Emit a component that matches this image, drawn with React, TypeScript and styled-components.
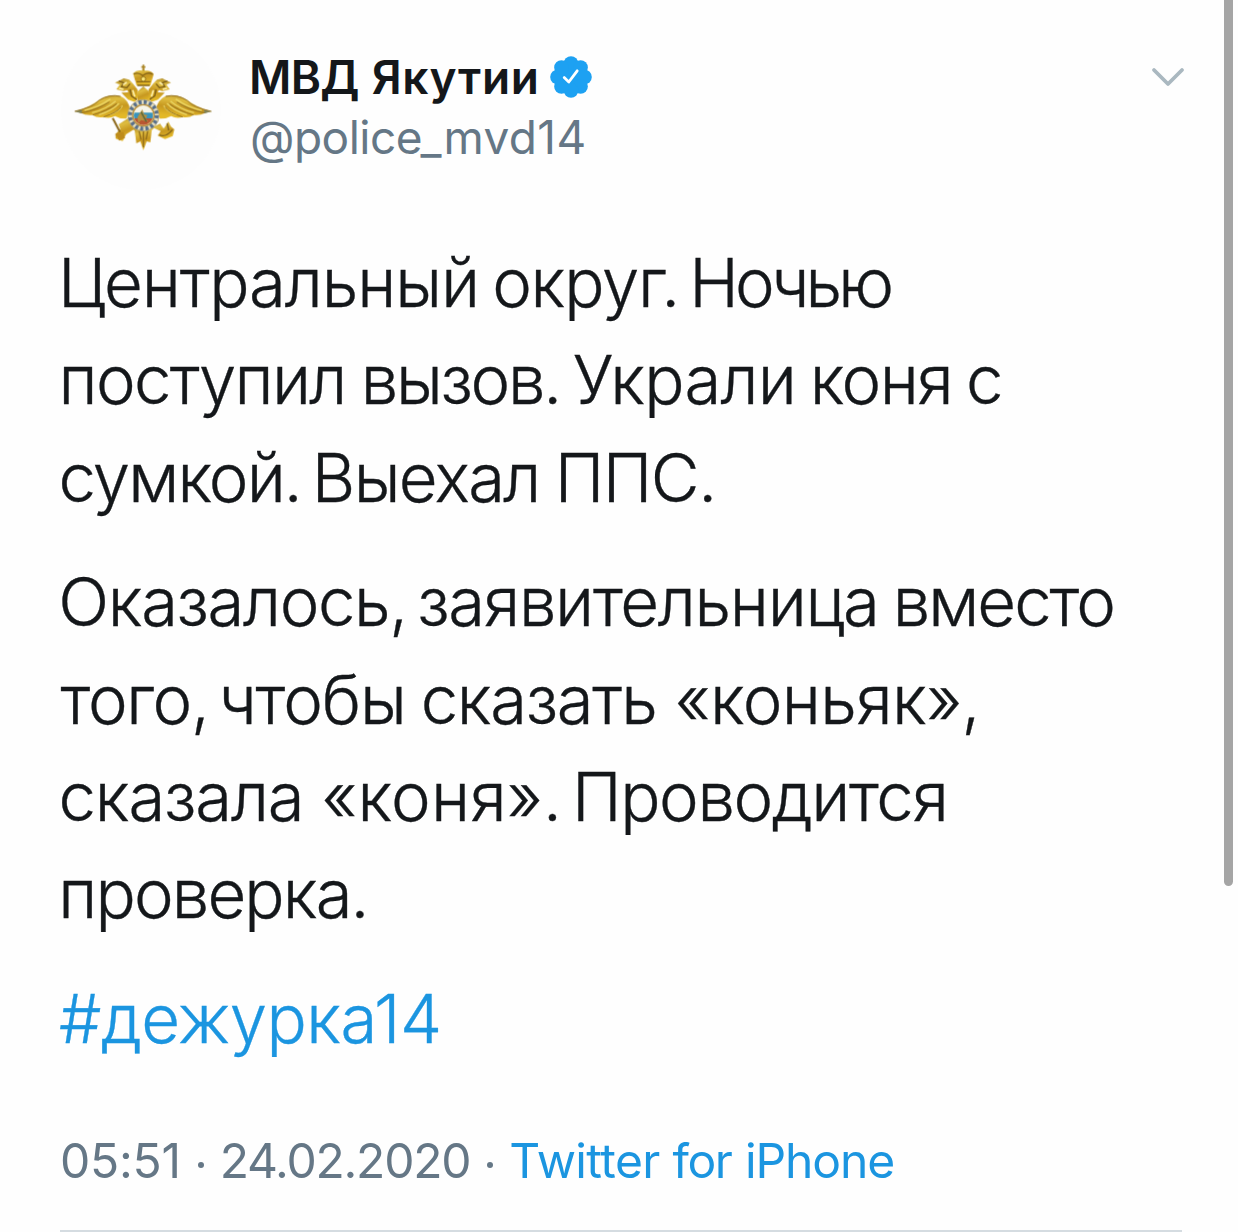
import React from "react";
import styled, { createGlobalStyle } from "styled-components";

interface Word {
  text: string;
  tracking: number;
  shift?: number;
}

const GlobalStyle = createGlobalStyle`
  body {
    margin: 0;
    background: #fefefe;
    overflow: hidden;
  }
`;

const Screen = styled.div`
  display: flex;
  justify-content: space-between;
  box-sizing: border-box;
  width: 1238px;
  height: 1232px;
  padding: 0 5px 0 60px;
  background: #fefefe;
  color: #14171a;
  font-family: Inter, "Liberation Sans", sans-serif;
  overflow: hidden;
`;

const Tweet = styled.article`
  display: flex;
  flex-direction: column;
  width: 1126px;
`;

const Header = styled.header`
  display: flex;
  flex: none;
  align-items: flex-start;
  height: 234px;
  padding-top: 30px;
  box-sizing: border-box;
`;

const Avatar = styled.div`
  width: 170px;
  height: 160px;
  flex: none;
`;

const Names = styled.div`
  display: flex;
  flex-direction: column;
  flex: 1;
  padding: 17px 0 0 19px;
`;

const NameRow = styled.div`
  display: flex;
  align-items: center;
  gap: 10px;
  height: 60px;
`;

const Name = styled.span`
  font-size: 46px;
  font-weight: 600;
  line-height: 60px;
  white-space: nowrap;
`;

const Handle = styled.span`
  padding-left: 1px;
  color: #657786;
  font-size: 46px;
  line-height: 60px;
  white-space: nowrap;
`;

const MenuButton = styled.button`
  display: flex;
  margin: 36px 0 0;
  padding: 0;
  border: 0;
  background: none;
`;

const Body = styled.div`
  display: flex;
  flex: none;
  flex-direction: column;
  gap: 27px;
`;

const Paragraph = styled.p<{ $link?: boolean }>`
  margin: 0;
  color: ${({ $link }) => ($link ? "#1b95e0" : "#14171a")};
  font-size: 67px;
  font-weight: 300;
  line-height: 97.4px;
  -webkit-text-stroke: 0.35px currentColor;
`;

const Line = styled.span`
  display: block;
  white-space: nowrap;
`;

const Tracked = styled.span<{ $tracking: number; $shift?: number }>`
  margin-left: ${({ $shift = 0 }) => $shift}px;
  letter-spacing: ${({ $tracking }) => $tracking}px;
`;

const Meta = styled.div`
  display: flex;
  flex: none;
  align-items: center;
  height: 60px;
  margin-top: 64px;
  color: #657786;
  font-size: 48px;
  line-height: 60px;
  white-space: nowrap;
`;

const Source = styled.span`
  color: #1b95e0;
`;

const Dot = styled.i`
  width: 6px;
  height: 6px;
  margin: 7px 16px 0 17px;
  border-radius: 50%;
  background: #657786;
`;

const Divider = styled.hr`
  flex: none;
  width: 1122px;
  height: 2px;
  margin: auto 0 0;
  border: 0;
  background: #d5dce1;
`;

const ScrollThumb = styled.div`
  width: 9px;
  height: 886px;
  border-radius: 0 0 5px 5px;
  background: #a5a5a5;
`;

const paragraphs: Word[][][] = [
  [
    [
      { text: "Центральный", tracking: -1.1, shift: -2.1 },
      { text: "округ.", tracking: -1.25, shift: -5.6 },
      { text: "Ночью", tracking: -4, shift: -8.5 },
    ],
    [
      { text: "поступил", tracking: -1.7, shift: -1.4 },
      { text: "вызов.", tracking: -2.3, shift: -3.8 },
      { text: "Украли", tracking: -0.75, shift: -5.9 },
      { text: "коня", tracking: -1.55, shift: -5.2 },
      { text: "с", tracking: 0, shift: -5.1 },
    ],
    [
      { text: "сумкой.", tracking: -1.9, shift: -1.4 },
      { text: "Выехал", tracking: -1.7, shift: -7.9 },
      { text: "ППС.", tracking: -1.5, shift: -3.9 },
    ],
  ],
  [
    [
      { text: "Оказалось,", tracking: -1.4, shift: -1.7 },
      { text: "заявительница", tracking: -1.3, shift: -8.4 },
      { text: "вместо", tracking: -2, shift: -4.8 },
    ],
    [
      { text: "того,", tracking: -1.35, shift: 0.6 },
      { text: "чтобы", tracking: -1.1, shift: -9 },
      { text: "сказать", tracking: -1.35, shift: -3.8 },
      { text: "«коньяк»,", tracking: -0.6, shift: -0.7 },
    ],
    [
      { text: "сказала", tracking: -1.2, shift: -1.4 },
      { text: "«коня».", tracking: 0.2, shift: -0.7 },
      { text: "Проводится", tracking: -1.4, shift: -8.9 },
    ],
    [{ text: "проверка.", tracking: -1.9, shift: -1.7 }],
  ],
];

const name: Word[] = [
  { text: "МВД", tracking: -0.7 },
  { text: "Якутии", tracking: 0.7, shift: 1.2 },
];

const source: Word[] = [
  { text: "Twitter", tracking: -0.6 },
  { text: "for", tracking: -1.45, shift: -0.7 },
  { text: "iPhone", tracking: -1.1 },
];

const Words: React.FC<{ words: Word[] }> = ({ words }) => (
  <>
    {words.map((word, i) => (
      <React.Fragment key={word.text}>
        {i > 0 && " "}
        <Tracked $tracking={word.tracking} $shift={word.shift}>
          {word.text}
        </Tracked>
      </React.Fragment>
    ))}
  </>
);

// One wing with its eagle head; the other side is mirrored.
const EagleHalf: React.FC = () => (
  <g>
    <path d="M44 244 Q88 232 115 211 Q145 190 181 198 Q204 207 211 239 L199 266 Q180 267 165 258 Q148 267 130 261 Q110 264 98 255 Q76 257 64 249Z" fill="url(#gold)" />
    <path d="M73 241 Q116 232 151 207 M96 248 Q139 237 167 213 M117 254 Q157 242 177 220 M148 255 Q180 243 187 227" fill="none" stroke="#ecd766" strokeWidth="4" />
    <path d="M64 249 Q112 239 148 216 M98 255 Q145 242 170 221 M130 261 Q173 247 183 231 M44 244 Q99 232 117 211 Q148 191 181 199" fill="none" stroke="#94701f" strokeWidth="3" />
    <path d="M44 244 L67 240 L64 250Z" fill="#7c805c" />
    <path d="M184 188 L204 209 L225 216 L237 198 L232 178 L218 160 L207 149 L191 145 L178 152 L165 158 L179 164 L169 178 L190 183 L202 180 L205 187Z" fill="url(#gold)" />
    <path d="M176 153 L191 158 L184 170 L200 173 L210 161 M210 178 L214 198 L231 209" fill="none" stroke="#795b17" strokeWidth="4" />
    <path d="M189 164 L200 157 M177 175 L190 178 M218 180 L224 200" stroke="#fff3b0" strokeWidth="5" />
  </g>
);

const Emblem: React.FC = () => (
  <svg width="170" height="160" viewBox="0 0 510 480">
    <defs>
      <linearGradient id="gold" x1="0" y1="0" x2="0.3" y2="1">
        <stop offset="0" stopColor="#a78326" />
        <stop offset="0.35" stopColor="#dfbd40" />
        <stop offset="0.65" stopColor="#c79820" />
        <stop offset="1" stopColor="#e3b827" />
      </linearGradient>
      <clipPath id="shield">
        <circle cx="250" cy="256" r="29" />
      </clipPath>
      <filter id="soft">
        <feGaussianBlur stdDeviation="1.2" />
      </filter>
    </defs>
    <circle cx="243" cy="240" r="240" fill="#fdfdfd" />
    <g filter="url(#soft)">
      <EagleHalf />
      <g transform="translate(498 0) scale(-1 1)">
        <EagleHalf />
      </g>
      <path d="M233 184 L250 169 L267 184 L269 218 L232 218Z" fill="url(#gold)" />
      <path d="M219 130 Q230 119 246 122 L250 107 L254 122 Q273 119 281 132 L271 167 L230 167Z" fill="url(#gold)" />
      <path d="M250 104 v18 M244 111 h12" stroke="#a88325" strokeWidth="5" />
      <path d="M221 132 Q236 125 248 137 Q264 124 278 133 M230 155 H271 M232 166 H269" fill="none" stroke="#876517" strokeWidth="4" />
      <circle cx="250" cy="147" r="7" fill="#fae77c" stroke="#967315" strokeWidth="3" />
      <path d="M207 263 L176 283 L181 297 L166 312 L167 326 L188 333 L198 313 L222 298Z" fill="url(#gold)" />
      <path d="M158 264 L180 306" stroke="#8d691b" strokeWidth="6" />
      <path d="M166 311 L191 306 L195 324 L177 332Z" fill="#bd8b1e" />
      <path d="M278 292 L302 303 L293 317 L315 327 L338 318 L343 298 L333 290 L325 275 L311 296 L300 281Z" fill="url(#gold)" />
      <path d="M298 315 Q318 323 337 299 M321 280 L326 301" fill="none" stroke="#7e611f" strokeWidth="4" />
      <path d="M216 294 L224 302 L229 340 L241 334 L250 361 L260 334 L271 337 L275 301 L287 289Z" fill="url(#gold)" />
      <path d="M250 301 V352 M237 303 L243 329 M263 303 L258 329" stroke="#8f6b19" strokeWidth="4" />
      <circle cx="250" cy="256" r="47" fill="#e5dfc0" stroke="#b8a672" strokeWidth="3" />
      <circle cx="250" cy="256" r="40" fill="none" stroke="#586f8b" strokeWidth="12" strokeDasharray="9 6.7" />
      <circle cx="250" cy="256" r="32" fill="#fff0cc" stroke="#b28b3a" strokeWidth="4" />
      <g clipPath="url(#shield)">
        <path d="M220 226h60v22h-60z" fill="#f5f4e9" />
        <path d="M220 248h60v17h-60z" fill="#3994bd" />
        <path d="M220 265h60v24h-60z" fill="#b95631" />
        <path d="M232 262 L241 247 L247 238 L252 253 L262 255 L257 267 L266 275 L243 270 L235 280Z" fill="#b59142" />
        <path d="M243 246 L259 275" stroke="#52663b" strokeWidth="4" />
      </g>
    </g>
  </svg>
);

const VerifiedBadge: React.FC = () => (
  <svg width="42" height="42" viewBox="0 0 42 42">
    <g fill="#1da1f2">
      <circle cx="21" cy="21" r="16" />
      {[0, 45, 90, 135, 180, 225, 270, 315].map((angle) => (
        <circle key={angle} cx="21" cy="7.5" r="7.3" transform={`rotate(${angle} 21 21)`} />
      ))}
    </g>
    <path d="M14.2 21.6 L18.8 26 L27.2 14.8" fill="none" stroke="#fff" strokeWidth="2.8" strokeLinecap="round" strokeLinejoin="round" />
  </svg>
);

const App: React.FC = () => (
  <>
    <GlobalStyle />
    <Screen>
      <Tweet>
        <Header>
          <Avatar>
            <Emblem />
          </Avatar>
          <Names>
            <NameRow>
              <Name>
                <Words words={name} />
              </Name>
              <VerifiedBadge />
            </NameRow>
            <Handle>
              <Tracked $tracking={-0.5}>@police</Tracked>
              <Tracked $tracking={0.4} $shift={-1.6}>_mvd14</Tracked>
            </Handle>
          </Names>
          <MenuButton aria-label="Ещё">
            <svg width="36" height="22" viewBox="0 0 36 22">
              <path d="M4 4 L18 18 L32 4" fill="none" stroke="#aab8c0" strokeWidth="3.8" strokeLinecap="round" strokeLinejoin="round" />
            </svg>
          </MenuButton>
        </Header>
        <Body>
          {paragraphs.map((lines, i) => (
            <Paragraph key={i}>
              {lines.map((words, j) => (
                <Line key={j}>
                  <Words words={words} />
                </Line>
              ))}
            </Paragraph>
          ))}
          <Paragraph $link>
            <Line>
              <Tracked $tracking={-0.55} $shift={-1}>#дежурка14</Tracked>
            </Line>
          </Paragraph>
        </Body>
        <Meta>
          <Tracked $tracking={-0.27}>05:51</Tracked>
          <Dot />
          <Tracked $tracking={-1.24}>24.02.2020</Tracked>
          <Dot />
          <Source>
            <Words words={source} />
          </Source>
        </Meta>
        <Divider />
      </Tweet>
      <ScrollThumb />
    </Screen>
  </>
);

export default App;
